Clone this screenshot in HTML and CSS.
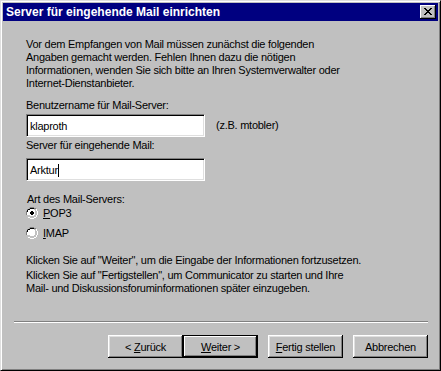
FILE: index.html
```html
<!DOCTYPE html>
<html lang="de">
<head>
    <meta charset="UTF-8">
    <title>Server für eingehende Mail einrichten</title>
    <link rel="stylesheet" href="styles.css">
</head>
<body>

    <div class="window">
        <!-- Title bar -->
        <div class="titlebar">
            <span class="title">Server für eingehende Mail einrichten</span>
            <button class="close-btn">
                <svg width="8" height="7" viewBox="0 0 8 7">
                    <path d="M0 0h2v1h1v1h2v-1h1v-1h2v1h-1v1h-1v1h-1v1h1v1h1v1h1v1h-2v-1h-1v-1h-2v1h-1v1h-2v-1h1v-1h1v-1h1v-1h-1v-1h-1v-1h-1z" fill="#000"/>
                </svg>
            </button>
        </div>

        <div class="content">
            <p class="intro">Vor dem Empfangen von Mail müssen zunächst die folgenden<br>Angaben gemacht werden. Fehlen Ihnen dazu die nötigen<br>Informationen, wenden Sie sich bitte an Ihren Systemverwalter oder<br>Internet-Dienstanbieter.</p>

            <label class="field-label">Benutzername für Mail-Server:</label>
            <div class="field-row">
                <div class="textbox">klaproth</div>
                <span class="hint">(z.B. mtobler)</span>
            </div>

            <label class="field-label second">Server für eingehende Mail:</label>
            <div class="field-row lower">
                <div class="textbox">Arktur<span class="caret"></span></div>
            </div>

            <div class="server-type">
                <div class="group-label">Art des Mail-Servers:</div>
                <div class="radio-row">
                    <svg class="radio" width="12" height="12" viewBox="0 0 12 12">
                        <path d="M4 0h4v1h2v1h-2v-1h-4v1h-2v2h-1v4h-1v-4h1v-2h2z" fill="#808080"/>
                        <path d="M4 1h4v1h-4v1h-2v2h-1v-2h1v-1h2z M1 5h1v3h-1z" fill="#000"/>
                        <path d="M4 2h4v1h1v1h1v4h-1v1h-1v1h-4v-1h-2v-1h-1v-3h1v-2h2z" fill="#fff"/>
                        <path d="M10 2h1v2h1v4h-1v2h-1v1h-2v1h-4v-1h-2v-1h2v1h4v-1h2v-2h1v-4h-1z" fill="#fff"/>
                        <path d="M9 3h1v5h-1v1h-1v1h-4v-1h-2v-1h2v1h4v-1h1z" fill="#c0c0c0"/>
                        <path d="M5 4h2v1h1v2h-1v1h-2v-1h-1v-2h1z" fill="#000"/>
                    </svg>
                    <span><u>P</u>OP3</span>
                </div>
                <div class="radio-row">
                    <svg class="radio" width="12" height="12" viewBox="0 0 12 12">
                        <path d="M4 0h4v1h2v1h-2v-1h-4v1h-2v2h-1v4h-1v-4h1v-2h2z" fill="#808080"/>
                        <path d="M4 1h4v1h-4v1h-2v2h-1v-2h1v-1h2z M1 5h1v3h-1z" fill="#000"/>
                        <path d="M4 2h4v1h1v1h1v4h-1v1h-1v1h-4v-1h-2v-1h-1v-3h1v-2h2z" fill="#fff"/>
                        <path d="M10 2h1v2h1v4h-1v2h-1v1h-2v1h-4v-1h-2v-1h2v1h4v-1h2v-2h1v-4h-1z" fill="#fff"/>
                        <path d="M9 3h1v5h-1v1h-1v1h-4v-1h-2v-1h2v1h4v-1h1z" fill="#c0c0c0"/>
                    </svg>
                    <span><u>I</u>MAP</span>
                </div>
            </div>

            <p class="note">Klicken Sie auf "Weiter", um die Eingabe der Informationen fortzusetzen.</p>
            <p class="note tight">Klicken Sie auf "Fertigstellen", um Communicator zu starten und Ihre<br>Mail- und Diskussionsforuminformationen später einzugeben.</p>
        </div>

        <!-- Separator and wizard buttons -->
        <div class="separator"></div>
        <div class="buttons">
            <button class="wiz-button">&lt; <u>Z</u>urück</button>
            <button class="wiz-button default"><u>W</u>eiter &gt;</button>
            <button class="wiz-button spaced"><u>F</u>ertig stellen</button>
            <button class="wiz-button spaced">Abbrechen</button>
        </div>
    </div>

</body>
</html>
```

FILE: styles.css
```css
html, body {
    margin: 0;
    padding: 0;
    background-color: #c0c0c0;
}
body {
    font-family: "Liberation Sans", Arial, sans-serif;
    font-size: 11px;
    letter-spacing: -0.25px;
    color: #000;
}
.window {
    box-sizing: border-box;
    width: 441px;
    height: 371px;
    background-color: #c0c0c0;
    border-top: 1px solid #dfdfdf;
    border-left: 1px solid #dfdfdf;
    border-right: 1px solid #000;
    border-bottom: 1px solid #000;
    box-shadow: inset 1px 1px 0 #fff, inset -1px -1px 0 #808080;
    padding: 2px;
    display: flex;
    flex-direction: column;
}
.titlebar {
    height: 18px;
    background-color: #000080;
    display: flex;
    align-items: center;
    justify-content: space-between;
    padding: 0 2px 0 3px;
}
.title {
    color: #fff;
    font-weight: bold;
    font-size: 12px;
    letter-spacing: 0;
}
.close-btn {
    box-sizing: border-box;
    width: 16px;
    height: 14px;
    padding: 0;
    background-color: #c0c0c0;
    border: none;
    box-shadow: inset -1px -1px 0 #000, inset 1px 1px 0 #fff, inset -2px -2px 0 #808080;
    display: flex;
    align-items: center;
    justify-content: center;
}
.close-btn svg {
    display: block;
    margin: -1px 0 0 -1px;
}
.content {
    padding: 17px 10px 0 23px;
    line-height: 13px;
    white-space: nowrap;
}
.intro {
    margin: 0;
}
.field-label {
    display: block;
    margin-top: 9px;
}
.field-label.second {
    margin-top: 2px;
}
.field-row {
    display: flex;
    align-items: center;
    margin-top: 2px;
}
.field-row.lower {
    margin-top: 6px;
}
.textbox {
    box-sizing: border-box;
    width: 179px;
    height: 23px;
    background-color: #fff;
    border-top: 1px solid #808080;
    border-left: 1px solid #808080;
    border-right: 1px solid #fff;
    border-bottom: 1px solid #fff;
    box-shadow: inset 1px 1px 0 #000, inset -1px -1px 0 #dfdfdf;
    padding: 4px 2px 0 3px;
    line-height: 14px;
}
.caret {
    display: inline-block;
    width: 1px;
    height: 13px;
    background-color: #000;
    vertical-align: -3px;
}
.hint {
    margin-left: 11px;
}
.server-type {
    margin-top: 12px;
}
.group-label {
    margin-left: 1px;
}
.radio-row {
    display: flex;
    align-items: center;
    gap: 5px;
    height: 12px;
    margin-top: 1px;
}
.radio-row + .radio-row {
    margin-top: 8px;
}
.radio {
    display: block;
}
.note {
    margin: 15px 0 0 0;
}
.note.tight {
    margin-top: 2px;
}
.separator {
    margin: auto 10px 0 11px;
    height: 1px;
    background-color: #808080;
    border-bottom: 1px solid #fff;
}
.buttons {
    display: flex;
    justify-content: flex-end;
    padding: 12px 10px 10px 0;
}
.wiz-button {
    box-sizing: border-box;
    width: 75px;
    height: 23px;
    padding: 0;
    font-family: "Liberation Sans", Arial, sans-serif;
    font-size: 11px;
    letter-spacing: -0.25px;
    color: #000;
    background-color: #c0c0c0;
    border: none;
    box-shadow: inset -1px -1px 0 #000, inset 1px 1px 0 #fff, inset -2px -2px 0 #808080, inset 2px 2px 0 #dfdfdf;
}
.wiz-button.default {
    border: 1px solid #000;
    box-shadow: inset -1px -1px 0 #000, inset 1px 1px 0 #fff, inset -2px -2px 0 #808080;
}
.wiz-button.spaced {
    margin-left: 10px;
}
```
